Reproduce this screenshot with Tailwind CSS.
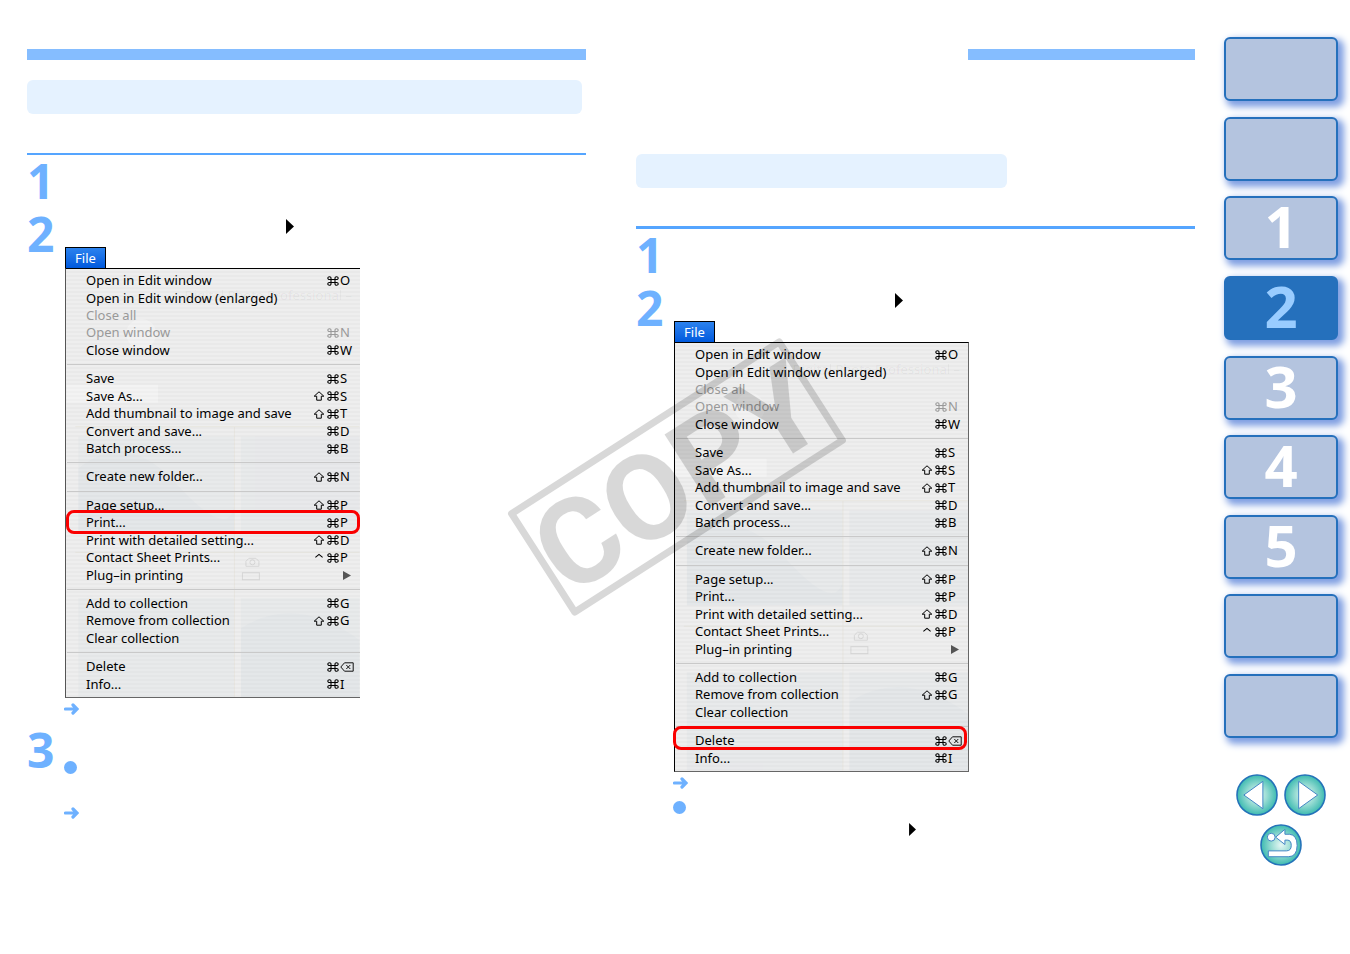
<!DOCTYPE html>
<html lang="en">
<head>
  <meta charset="UTF-8">
  <meta name="viewport" content="width=device-width, initial-scale=1.0">
  <title>Printing and deleting images</title>
  <script src="https://cdn.jsdelivr.net/npm/@tailwindcss/browser@4"></script>
</head>
<body class="bg-white">
  <!-- shared icons -->
  <svg class="hidden" aria-hidden="true">
    <symbol id="arrow" viewBox="0 0 15 12">
      <path d="M1.5 6H12M9 2L13 6L9 10" fill="none" stroke="#6eb1ff" stroke-width="3.2" stroke-linecap="round" stroke-linejoin="miter" />
    </symbol>
    <symbol id="triangle" viewBox="0 0 8 15">
      <path d="M0 0L8 7.5L0 15Z" fill="#000" />
    </symbol>
    <symbol id="backspace" viewBox="0 0 14 10">
      <path d="M4.5 .8H13.2V9.2H4.5L.8 5ZM6.3 3L10.3 7M10.3 3L6.3 7" fill="none" stroke="#111" stroke-width="1" />
    </symbol>
    <symbol id="command" viewBox="0 0 12 10">
      <path d="M4 3.5V2.2A1.6 1.4 0 1 0 2.4 3.5H9.6A1.6 1.4 0 1 0 8 2.2V7.8A1.6 1.4 0 1 0 9.6 6.5H2.4A1.6 1.4 0 1 0 4 7.8Z" fill="none" stroke="currentColor" stroke-width="1.1" />
    </symbol>
    <symbol id="shift" viewBox="0 0 12 10">
      <path d="M6 .8L10.8 5.2H8.3V9.2H3.7V5.2H1.2Z" fill="none" stroke="currentColor" stroke-width="1" />
    </symbol>
    <symbol id="control" viewBox="0 0 12 10">
      <path d="M2.4 4.4L6 1.4L9.6 4.4" fill="none" stroke="currentColor" stroke-width="1.1" />
    </symbol>
    <!-- windows showing faintly through the translucent menu -->
    <symbol id="ghost" viewBox="0 0 294 429">
      <rect x="0" y="116" width="92" height="18" fill="#fff" opacity=".3" />
      <circle cx="75" cy="65" r="15" fill="#fff" opacity=".25" />
      <g fill="#b9c9d6" opacity=".1">
        <rect x="12" y="168" width="156" height="95" />
        <rect x="175" y="168" width="119" height="95" />
        <rect x="12" y="330" width="156" height="99" />
        <rect x="175" y="330" width="119" height="99" />
      </g>
      <path d="M12 200Q60 160 110 215T168 240V263H12ZM175 360Q230 325 294 372V429H175Z" fill="#8fa2b0" opacity=".03" />
      <path d="M168.5 158V429M9 158H294M9 284H294" stroke="#cdbf9a" opacity=".15" />
      <g fill="none" stroke="#8a8a8a" opacity=".22">
        <path d="M180 298V293L183 290H190L193 293V298Z" />
        <circle cx="186.500" cy="294" r="2.500" />
        <rect x="176.500" y="304.500" width="17" height="7" />
      </g>
    </symbol>
  </svg>

  <main class="relative flex min-h-screen overflow-hidden pl-[27px] pr-3 font-['Noto_Sans',sans-serif]">
    <article class="min-w-0 flex-1 pt-[49px]">
      <div class="h-[11px] bg-[#85bdff]"></div>
      <div class="mr-1 mt-5 h-[34px] rounded-md bg-[#e5f2ff]"></div>
      <div class="mb-px mt-[39px] h-[2px] bg-[#55a5ff]"></div>
      <ol>
        <li class="grid h-[53px] grid-cols-[37px_1fr]">
          <span class="font-['Open_Sans',sans-serif] text-5xl leading-[50px] font-bold text-[#6eb1ff]">1</span>
        </li>
        <li class="grid grid-cols-[37px_1fr]">
          <span class="font-['Open_Sans',sans-serif] text-5xl leading-[50px] font-bold text-[#6eb1ff]">2</span>
          <div class="pt-[10px]">
            <svg class="ml-[222px] h-[15px] w-2"><use href="#triangle" /></svg>
            <div class="ml-px mt-[13px] w-[295px]" data-menu="Print..."></div>
            <svg class="mb-[10px] mt-[5px] h-3 w-[15px]"><use href="#arrow" /></svg>
          </div>
        </li>
        <li class="grid grid-cols-[37px_1fr]">
          <span class="font-['Open_Sans',sans-serif] text-5xl leading-[50px] font-bold text-[#6eb1ff]">3</span>
          <div class="pt-9">
            <div class="size-[13px] rounded-full bg-[#6eb1ff]"></div>
            <svg class="mt-[33px] h-3 w-[15px]"><use href="#arrow" /></svg>
          </div>
        </li>
      </ol>
    </article>

    <article class="ml-[50px] min-w-0 flex-1 pt-[49px]">
      <div class="ml-auto h-[11px] w-[227px] bg-[#85bdff]"></div>
      <div class="mt-[94px] h-[34px] w-[371px] rounded-md bg-[#e5f2ff]"></div>
      <div class="mb-px mt-[38px] h-[3px] bg-[#55a5ff]"></div>
      <ol>
        <li class="grid h-[53px] grid-cols-[37px_1fr]">
          <span class="font-['Open_Sans',sans-serif] text-5xl leading-[50px] font-bold text-[#6eb1ff]">1</span>
        </li>
        <li class="grid grid-cols-[37px_1fr]">
          <span class="font-['Open_Sans',sans-serif] text-5xl leading-[50px] font-bold text-[#6eb1ff]">2</span>
          <div class="pt-[10px]">
            <svg class="ml-[222px] h-[15px] w-2"><use href="#triangle" /></svg>
            <div class="ml-px mt-[13px] w-[295px]" data-menu="Delete"></div>
            <svg class="mt-[5px] h-3 w-[15px]"><use href="#arrow" /></svg>
            <div class="mt-3 size-[13px] rounded-full bg-[#6eb1ff]"></div>
            <svg class="ml-[236px] mt-[9px] h-[13px] w-[7px]"><use href="#triangle" /></svg>
          </div>
        </li>
      </ol>
    </article>

    <nav class="ml-[29px] w-[114px] shrink-0 pt-[37px]" aria-label="Chapters">
      <div id="tabs" class="flex min-h-[701px] flex-col justify-between"></div>
      <div class="mt-9 flex flex-wrap justify-center gap-x-[6px] gap-y-2">
        <button aria-label="Previous page" class="size-[42px]">
          <svg viewBox="0 0 43 43">
            <defs>
              <radialGradient id="teal">
                <stop offset="0" stop-color="#e6f7f4" />
                <stop offset=".5" stop-color="#98dcd3" />
                <stop offset="1" stop-color="#3cbab0" />
              </radialGradient>
            </defs>
            <circle cx="21.500" cy="21.500" r="20.500" fill="url(#teal)" stroke="#2472b9" stroke-width="1.600" />
            <path d="M8 21.500L27.500 7.500V35.500Z" fill="#fff" stroke="#3f83c4" />
          </svg>
        </button>
        <button aria-label="Next page" class="size-[42px]">
          <svg viewBox="0 0 43 43">
            <circle cx="21.500" cy="21.500" r="20.500" fill="url(#teal)" stroke="#2472b9" stroke-width="1.600" />
            <path d="M34.500 21.500L15 7.500V35.500Z" fill="#fff" stroke="#3f83c4" />
          </svg>
        </button>
        <button aria-label="Back" class="size-[42px]">
          <svg viewBox="0 0 43 43">
            <circle cx="21.500" cy="21.500" r="20.500" fill="url(#teal)" stroke="#2472b9" stroke-width="1.600" />
            <circle cx="11.500" cy="13.500" r="4" fill="#fff" stroke="#3f83c4" />
            <path d="M16 13.500L25.500 5.500V10.500H30Q38 11 38 22Q38 33.500 29 33.500H8.500V27.500H27Q32 27.500 32 22Q32 16.500 28 16.500H25.500V21Z" fill="#fff" stroke="#3f83c4" />
          </svg>
        </button>
      </div>
    </nav>

    <!-- stamp over both columns -->
    <svg class="pointer-events-none absolute left-[506px] top-[336px] h-[282px] w-[342px]" viewBox="0 0 342 282" aria-hidden="true">
      <g transform="translate(171 141) rotate(-32.700)" opacity=".15">
        <rect x="-159" y="-58.500" width="318" height="117" fill="none" stroke="#000" stroke-width="7" stroke-linejoin="round" />
        <text x="0" y="43" text-anchor="middle" class="font-['Roboto',sans-serif] text-[120px] font-bold">COPY</text>
      </g>
    </svg>
  </main>

  <script>
    // [label, modifier, key, disabled]; null is a separator
    const fileMenu = [
      ['Open in Edit window', '', 'O'],
      ['Open in Edit window (enlarged)'],
      ['Close all', '', '', true],
      ['Open window', '', 'N', true],
      ['Close window', '', 'W'],
      null,
      ['Save', '', 'S'],
      ['Save As...', 'shift', 'S'],
      ['Add thumbnail to image and save', 'shift', 'T'],
      ['Convert and save...', '', 'D'],
      ['Batch process...', '', 'B'],
      null,
      ['Create new folder...', 'shift', 'N'],
      null,
      ['Page setup...', 'shift', 'P'],
      ['Print...', '', 'P'],
      ['Print with detailed setting...', 'shift', 'D'],
      ['Contact Sheet Prints...', 'control', 'P'],
      ['Plug–in printing', '', 'submenu'],
      null,
      ['Add to collection', '', 'G'],
      ['Remove from collection', 'shift', 'G'],
      ['Clear collection'],
      null,
      ['Delete', '', 'backspace'],
      ['Info...', '', 'I'],
    ];

    function icon(name) {
      return `<svg class="h-[10px] w-3"><use href="#${name}" /></svg>`;
    }

    function shortcut(modifier, key) {
      if (!key) return '';
      if (key === 'submenu') return '<svg class="ml-[30px] h-[9px] w-2"><path d="M0 0L8 4.5L0 9Z" fill="#555" /></svg>';
      const last = key === 'backspace'
        ? '<svg class="h-[10px] w-[14px]"><use href="#backspace" /></svg>'
        : `<span>${key}</span>`;
      return (modifier ? icon(modifier) : '<span class="w-3"></span>') + '<span class="w-[2px]"></span>' + icon('command') + '<span class="w-px"></span>' + last;
    }

    function menuRow(item, marked) {
      if (!item) return '<li class="flex h-[11px] items-center pl-px"><hr class="w-full border-[#c9c9c9]"></li>';
      const [label, modifier, key, disabled] = item;
      let ring = '';
      if (label === marked) {
        ring = marked === 'Delete'
          ? '<span class="absolute -left-[2px] -top-[6px] h-6 w-[294px] rounded-lg border-3 border-[#fa0000]"></span>'
          : '<span class="absolute left-0 -top-[4px] h-6 w-[294px] rounded-lg border-3 border-[#fa0000]"></span>';
      }
      return `<li class="relative flex flex-1">
        <button class="flex w-full items-center pl-5 text-left text-[13px] leading-[17px] whitespace-nowrap text-black disabled:text-[#999]" ${disabled ? 'disabled' : ''}>
          <span class="flex-1">${label}</span>
          <span class="flex w-[47px] items-center">${shortcut(modifier, key)}</span>
        </button>${ring}
      </li>`;
    }

    document.querySelectorAll('[data-menu]').forEach(el => {
      const marked = el.dataset.menu;
      const edge = marked === 'Delete' ? 'border-l-black border-r border-r-[#666]' : 'border-l-[#555]';
      el.innerHTML = `
        <button class="block h-[21px] w-[41px] border border-b-0 border-black bg-linear-to-b from-[#2b82ee] to-[#0059dd] text-center text-[13px] leading-[20px] text-white">File</button>
        <div class="relative flex min-h-[430px] border-l border-t border-b border-t-black border-b-[#666] ${edge} bg-[repeating-linear-gradient(to_bottom,#eeeeee_0px,#eeeeee_2px,#e9e9e9_2px,#e9e9e9_4px)]">
          <svg class="absolute inset-0 size-full" viewBox="0 0 294 429" aria-hidden="true"><use href="#ghost" /></svg>
          <span class="absolute right-2 top-[18px] text-[13px] leading-[17px] text-black/5" aria-hidden="true">Digital Photo Professional –</span>
          <ul class="relative flex w-full flex-col pt-[3px] pb-1">${fileMenu.map(item => menuRow(item, marked)).join('')}</ul>
        </div>`;
    });

    const current = '2';
    document.getElementById('tabs').innerHTML = ['', '', '1', '2', '3', '4', '5', '', ''].map(n => {
      const tone = n === current ? 'bg-[#2570bc] text-[#99ccff]' : 'bg-[#b4c4df] text-white';
      return `<a href="#" aria-label="${n ? 'Chapter ' + n : 'Section'}" class="flex h-16 items-center justify-center rounded-md border-2 border-[#2570bc] pb-1 font-['Open_Sans',sans-serif] text-[58px] leading-[60px] font-bold shadow-[4px_4px_7px_2px_#7f9fe2] ${tone}">${n}</a>`;
    }).join('');
  </script>
</body>
</html>
